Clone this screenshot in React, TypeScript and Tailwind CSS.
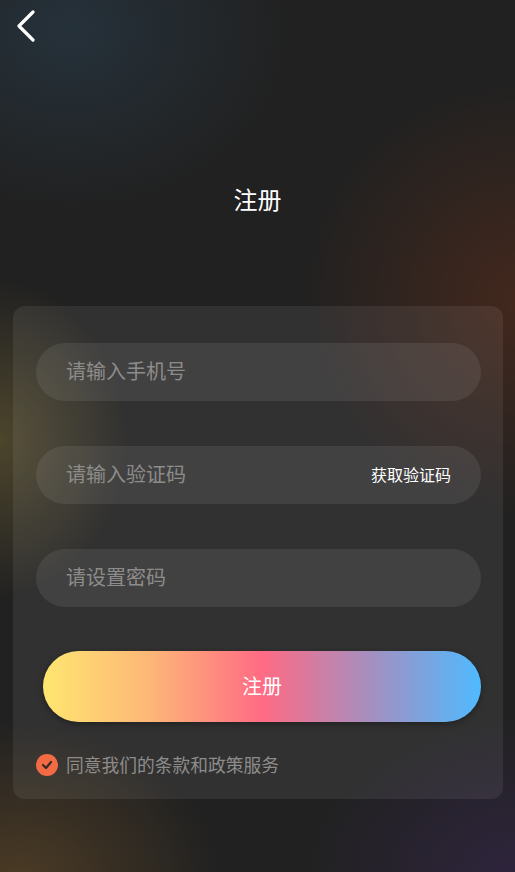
import { useState } from "react";

const fieldCls =
  "h-[58px] w-full rounded-full bg-white/[0.08] px-[30px] flex items-center text-[20px] text-[#8e8c8b]";

const App = () => {
  const [agreed, setAgreed] = useState(true);

  return (
    <div
      className="min-h-[872px] w-full bg-[#212121] font-['Noto_Sans','Noto_Sans_CJK_SC',sans-serif] text-white
                 bg-[radial-gradient(ellipse_220px_180px_at_70px_30px,rgba(40,60,75,0.6),transparent),radial-gradient(ellipse_220px_220px_at_520px_300px,rgba(95,45,25,0.55),transparent),radial-gradient(ellipse_130px_160px_at_0px_440px,rgba(120,105,55,0.5),transparent),radial-gradient(ellipse_200px_160px_at_20px_880px,rgba(110,80,40,0.55),transparent),radial-gradient(ellipse_220px_170px_at_520px_880px,rgba(60,40,90,0.5),transparent)]"
    >
      {/* Header */}
      <div className="h-[52px] px-[16px] pt-[10px]">
        <button className="block">
          <svg width="22" height="32" viewBox="0 0 22 32" fill="none">
            <path
              d="M17 2 L3 16 L17 30"
              stroke="white"
              strokeWidth="3.2"
              strokeLinecap="round"
              strokeLinejoin="round"
            />
          </svg>
        </button>
      </div>

      <h1 className="mt-[133px] text-center text-[24px] leading-[30px]">注册</h1>

      {/* Form card */}
      <div className="ml-[13px] mr-[12px] mt-[91px] rounded-[12px] bg-white/[0.07] pl-[23px] pr-[22px] pt-[37px] pb-[22px]">
        <div className="flex flex-col gap-[45px]">
          <div className={fieldCls}>请输入手机号</div>
          <div className={`${fieldCls} justify-between`}>
            <span>请输入验证码</span>
            <span className="text-[16px] text-white">获取验证码</span>
          </div>
          <div className={fieldCls}>请设置密码</div>
        </div>

        <button
          className="mt-[44px] ml-[7px] flex h-[71px] w-[438px] items-center justify-center rounded-full
                     bg-[linear-gradient(90deg,#ffe670_0%,#fdb578_25%,#ff6b84_50%,#a48fc0_75%,#4fbaff_100%)]
                     text-[20px] text-white shadow-[0_2px_6px_rgba(0,0,0,0.35)]"
        >
          注册
        </button>

        <div className="mt-[31px] flex items-center gap-[8px]">
          <button
            onClick={() => setAgreed(!agreed)}
            className="flex h-[22px] w-[22px] items-center justify-center rounded-full bg-[#f26b45]"
          >
            {agreed && (
              <svg width="12" height="10" viewBox="0 0 12 10" fill="none">
                <path
                  d="M2 5 L5 8 L10 2"
                  stroke="#3a2a25"
                  strokeWidth="2.2"
                  strokeLinecap="round"
                  strokeLinejoin="round"
                />
              </svg>
            )}
          </button>
          <span className="text-[17.75px] leading-[24px] text-[#8e8c8b]">同意我们的条款和政策服务</span>
        </div>
      </div>
    </div>
  );
};

export default App;
